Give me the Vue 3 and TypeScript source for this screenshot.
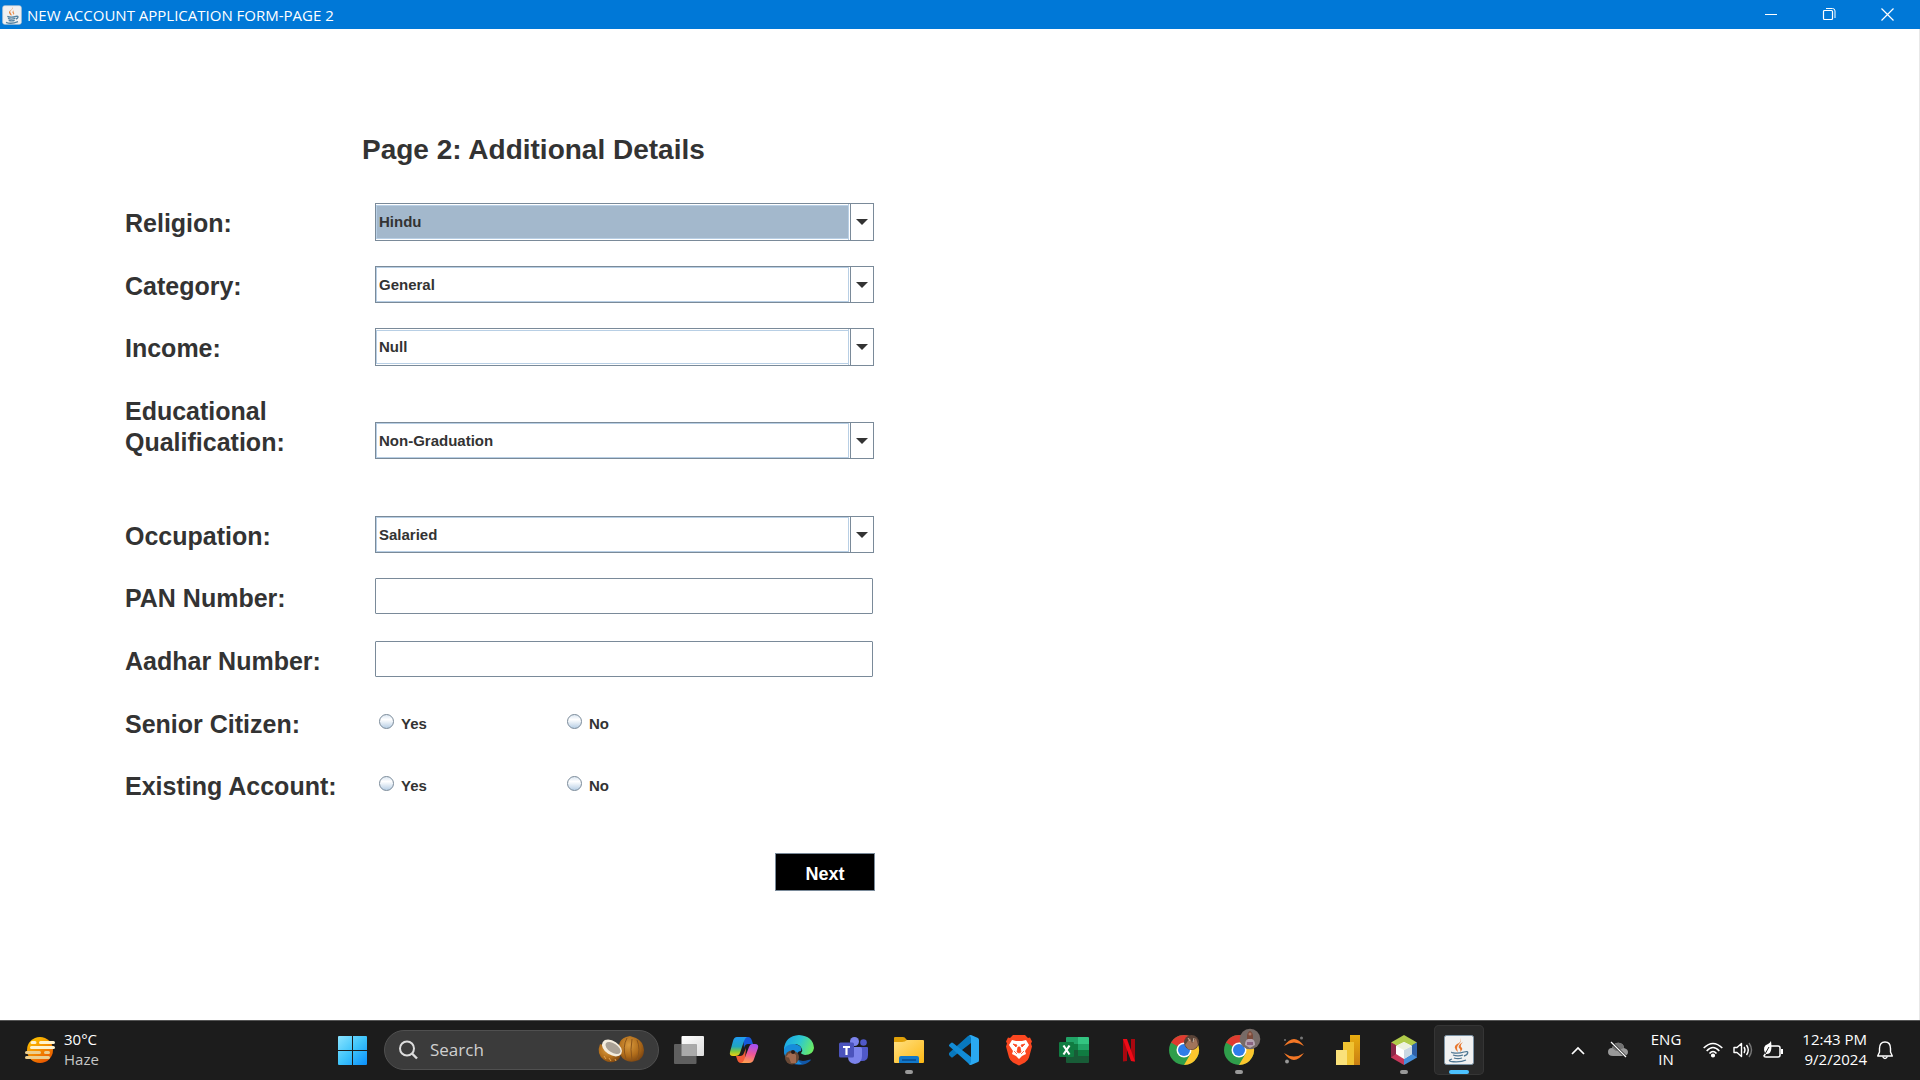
<script setup lang="ts">
import { reactive } from 'vue'

interface ComboRow {
  key: 'religion' | 'category' | 'income' | 'education' | 'occupation'
  label: string
  options: string[]
  size?: 'tall' | 'double'
}

const combos: ComboRow[] = [
  { key: 'religion', label: 'Religion:', options: ['Hindu', 'Muslim', 'Sikh', 'Christian', 'Other'], size: 'tall' },
  { key: 'category', label: 'Category:', options: ['General', 'OBC', 'SC', 'ST', 'Other'] },
  { key: 'income', label: 'Income:', options: ['Null', '<1,50,000', '<2,50,000', '<5,00,000', 'Upto 10,00,000'], size: 'tall' },
  { key: 'education', label: 'Educational Qualification:', options: ['Non-Graduation', 'Graduate', 'Post-Graduate', 'Doctorate'], size: 'double' },
  { key: 'occupation', label: 'Occupation:', options: ['Salaried', 'Self-Employed', 'Business', 'Student', 'Retired'] },
]

const form = reactive({
  religion: 'Hindu',
  category: 'General',
  income: 'Null',
  education: 'Non-Graduation',
  occupation: 'Salaried',
  pan: '',
  aadhar: '',
  senior: '',
  existing: '',
})
</script>

<template>
  <div class="desktop">
    <header class="titlebar">
      <svg class="app-icon" viewBox="0 0 30 30" aria-hidden="true">
        <rect x="1" y="1" width="28" height="28" rx="3" fill="#f1f1f1" stroke="#c3ccd3" />
        <path d="M16 3c2 4-6 5-3 9 1 2 2 2 1 4-5-4-4-6-1-8 2-2 3-3 3-5zM18 8c-3 2-3 3-1 5 0 1-1 2-1 2 4-2 2-3 1-5z" fill="#e8833a" />
        <path d="M8 17c4 2 10 1 13 0M9 20c4 2 8 1 11 0M10 23c3 1 6 1 9 0M6 26c5 2 13 1 18-1M21 17c5-1 3 3 0 4" fill="none" stroke="#5382a1" stroke-width="2" />
      </svg>
      <h1 class="window-title">NEW ACCOUNT APPLICATION FORM-PAGE 2</h1>
      <div class="window-controls">
        <button type="button" aria-label="Minimize">
          <svg width="13" height="13" viewBox="0 0 13 13"><path d="M0 6.500h12" stroke="#fff" /></svg>
        </button>
        <button type="button" aria-label="Restore">
          <svg width="13" height="13" viewBox="0 0 13 13" fill="none" stroke="#fff">
            <rect x=".5" y="2.500" width="9" height="9" rx="1" stroke-width="1.200" />
            <path d="M3 .5h6.500q2.500 0 2.500 2.500V10" />
          </svg>
        </button>
        <button type="button" aria-label="Close">
          <svg width="13" height="13" viewBox="0 0 13 13"><path d="M.5.500l12 12M12.500.500l-12 12" stroke="#fff" stroke-width="1.200" /></svg>
        </button>
      </div>
    </header>

    <main class="content">
      <form class="form" @submit.prevent>
        <h2 class="heading">Page 2: Additional Details</h2>

        <div v-for="row in combos" :key="row.key" class="row" :class="row.size">
          <label class="label" :for="row.key">{{ row.label }}</label>
          <div class="combo" :class="{ selected: row.key === 'religion' }">
            <select :id="row.key" v-model="form[row.key]">
              <option v-for="o in row.options" :key="o">{{ o }}</option>
            </select>
            <span class="combo-arrow" aria-hidden="true"></span>
          </div>
        </div>

        <div class="row tall">
          <label class="label" for="pan">PAN Number:</label>
          <input id="pan" v-model="form.pan" class="field" type="text" />
        </div>
        <div class="row tall">
          <label class="label" for="aadhar">Aadhar Number:</label>
          <input id="aadhar" v-model="form.aadhar" class="field" type="text" />
        </div>

        <div class="row" role="radiogroup" aria-labelledby="senior-label">
          <span id="senior-label" class="label">Senior Citizen:</span>
          <div class="radios">
            <label><input v-model="form.senior" type="radio" name="senior" value="yes" />Yes</label>
            <label><input v-model="form.senior" type="radio" name="senior" value="no" />No</label>
          </div>
        </div>
        <div class="row" role="radiogroup" aria-labelledby="existing-label">
          <span id="existing-label" class="label">Existing Account:</span>
          <div class="radios">
            <label><input v-model="form.existing" type="radio" name="existing" value="yes" />Yes</label>
            <label><input v-model="form.existing" type="radio" name="existing" value="no" />No</label>
          </div>
        </div>

        <div class="actions">
          <button class="next" type="submit">Next</button>
        </div>
      </form>
    </main>

    <footer class="taskbar">
      <div class="weather">
        <svg width="30" height="26" viewBox="0 0 30 26">
          <defs>
            <linearGradient id="sun" x1="0" y1="0" x2=".6" y2="1"><stop offset="0" stop-color="#ffd000" /><stop offset="1" stop-color="#ea5a00" /></linearGradient>
          </defs>
          <circle cx="15" cy="13" r="13" fill="url(#sun)" />
          <path d="M7 5.500h3M15.500 5.500h13M6.500 10.500h22" stroke="#fff3cf" stroke-width="3" stroke-linecap="round" />
          <path d="M1.500 15.500h13M20.500 15.500h3M1.500 20.500h22" stroke="#ecce8d" stroke-width="3" stroke-linecap="round" />
        </svg>
        <div class="lines">
          <div>30°C</div>
          <div class="dim">Haze</div>
        </div>
      </div>

      <button class="start" type="button" aria-label="Start">
        <svg width="29" height="29" viewBox="0 0 29 29">
          <defs>
            <linearGradient id="win" x1="0" y1="0" x2="1" y2="1"><stop offset="0" stop-color="#8be4ff" /><stop offset=".5" stop-color="#3ec4fb" /><stop offset="1" stop-color="#0a8ffb" /></linearGradient>
          </defs>
          <path d="M1 0h13v14H0V1q0-1 1-1zM15 0h13q1 0 1 1v13H15zM0 15h14v14H1q-1 0-1-1zM15 15h14v13q0 1-1 1H15z" fill="url(#win)" />
        </svg>
      </button>

      <label class="search">
        <svg width="20" height="20" viewBox="0 0 20 20" fill="none" stroke="#dcdcdc" stroke-width="2">
          <circle cx="8" cy="8.500" r="7" /><path d="M13 13.500l5 5" stroke-width="2.400" />
        </svg>
        <input type="text" placeholder="Search" aria-label="Search" />
        <svg width="46" height="28" viewBox="0 0 46 28">
          <defs>
            <radialGradient id="nut" cx=".4" cy=".35" r=".7"><stop offset="0" stop-color="#d99a3e" /><stop offset=".6" stop-color="#b06c1a" /><stop offset="1" stop-color="#7c4511" /></radialGradient>
          </defs>
          <path d="M21 9q1-6 7-8l4-1 6 2q7 3 8 12 0 9-8 11-6 2-11-1-7-4-6-15z" fill="url(#nut)" />
          <path d="M29 2q-5 9-1 21M34 3q-2 10 0 22M39 4q4 9 0 20" stroke="#8b551b" fill="none" />
          <path d="M2 8q-4 10 4 16 6 4 12 1 5-2 5-9z" fill="url(#nut)" />
          <ellipse cx="14" cy="12" rx="11" ry="7" transform="rotate(33 14 12)" fill="#f4ecdd" />
          <ellipse cx="15" cy="12" rx="8.500" ry="4.500" transform="rotate(33 15 12)" fill="#aaa195" />
          <path d="M6 20l2 3M11 22l2 3M17 23l1 2" stroke="#e2a34d" />
        </svg>
      </label>

      <nav class="apps" aria-label="Pinned apps">
        <button type="button" aria-label="Task view">
          <svg viewBox="0 0 30 30">
            <defs>
              <linearGradient id="tv" x1="0" y1="0" x2="1" y2="1"><stop offset="0" stop-color="#fff" /><stop offset="1" stop-color="#dcdcdc" /></linearGradient>
            </defs>
            <rect x="7.500" y="1" width="22.500" height="20" rx="1" fill="url(#tv)" />
            <rect y="9" width="22.500" height="20" rx="1" fill="#5f5f5f" />
            <rect x="7.500" y="9" width="15" height="12" fill="#aaa" />
          </svg>
        </button>
        <button type="button" aria-label="Copilot">
          <svg viewBox="0 0 30 30">
            <defs>
              <linearGradient id="cp1" x1="0" y1="0" x2="0" y2="1"><stop offset="0" stop-color="#219bf2" /><stop offset=".5" stop-color="#20a5c0" /><stop offset=".75" stop-color="#7ec83f" /><stop offset="1" stop-color="#f5cf10" /></linearGradient>
              <linearGradient id="cp2" x1=".5" y1="0" x2=".3" y2="1"><stop offset="0" stop-color="#a34ff2" /><stop offset=".5" stop-color="#ef5796" /><stop offset="1" stop-color="#ffa04e" /></linearGradient>
            </defs>
            <path d="M14 2h5q3 0 4 4l1 3h-5q-3 0-4 4z" fill="#1558da" />
            <path d="M8 2h10q-2 1-3 4l-4 12q-1 3-5 3H4q-4 0-3-4L4 6q1-4 4-4z" fill="url(#cp1)" />
            <path d="M7 21h4q3 0 4-3l2-5q-1 10-1 15h-4q-3 0-4-4z" fill="#f35b36" />
            <path d="M23 9h3q4 0 3 4l-4 11q-1 4-5 4h-8q2 0 3-3l5-13q1-3 3-3z" fill="url(#cp2)" />
          </svg>
        </button>
        <button type="button" aria-label="Edge">
          <svg viewBox="0 0 30 30">
            <defs>
              <linearGradient id="ed1" x1="0" y1=".3" x2="1" y2=".6"><stop offset="0" stop-color="#1aa6e8" /><stop offset=".5" stop-color="#2dc8d0" /><stop offset="1" stop-color="#6ced61" /></linearGradient>
            </defs>
            <path d="M10 10q-4 5 0 11 5 7 14 4 3-1 3 0-4 5-12 5Q1 29 0 15q2-8 10-5z" fill="#1257a7" />
            <path d="M0 13q3-6 11-4 8 2 6 7-3 0-4 3-1 6 5 10Q3 30 0 18z" fill="#168cda" />
            <path d="M0 14Q1 1 15 0q14 1 15 13-1 7-9 7-4-1-4-2 2-2 1-4-2-5-8-5Q3 9 0 14z" fill="url(#ed1)" />
            <circle cx="8" cy="22.500" r="7" fill="#694936" />
            <path d="M4 20q4-5 8 0v8H7zM2 22l3-4 2 5z" fill="#a26b50" />
            <circle cx="9" cy="17" r="2" fill="#241a19" />
          </svg>
        </button>
        <button type="button" aria-label="Teams">
          <svg viewBox="0 0 30 30">
            <circle cx="24.500" cy="7.500" r="3.300" fill="#5059c9" />
            <path d="M20 12h8q1 0 1 1v7q0 6-6 6h-3z" fill="#5059c9" />
            <circle cx="15.500" cy="6.500" r="4.500" fill="#7b83eb" />
            <path d="M10 12h11q2 0 2 2v7q0 7-7 8-7-1-7-7z" fill="#7b83eb" />
            <rect y="7.500" width="15" height="15" rx="1.500" fill="#4b53bc" />
            <path d="M4 11h7v2H8.600v7H6.400v-7H4z" fill="#fff" />
          </svg>
        </button>
        <button type="button" class="running" aria-label="File Explorer">
          <svg viewBox="0 0 30 30">
            <defs>
              <linearGradient id="fx" x1="0" y1="0" x2="1" y2="1"><stop offset="0" stop-color="#ffe082" /><stop offset="1" stop-color="#fdb813" /></linearGradient>
            </defs>
            <path d="M0 3q0-1 1-1h8q2 0 3 2l2 2v5H0z" fill="#e0a008" />
            <path d="M0 7h8q3 0 5-2h16q1 0 1 1v21q0 1-1 1H1q-1 0-1-1z" fill="url(#fx)" />
            <path d="M5 28v-5q0-2 2-2h16q2 0 2 2v5z" fill="#1178ca" />
            <path d="M8 25h14" stroke="#074a8d" stroke-width="1.500" />
          </svg>
        </button>
        <button type="button" aria-label="Visual Studio Code">
          <svg viewBox="0 0 30 30">
            <path d="M22 0v8L4 22q-1 1-2 0l-2-2v-2L19 1q2-1 3-1z" fill="#0878bd" />
            <path d="M0 11v-1l2-2q1-1 2 0l18 14v8q-2 0-3-2z" fill="#128bd5" />
            <path d="M22 0l7 3q1 1 1 2v20q0 2-1 2l-7 3q-1 0-2-1 2 0 2-2V3q0-2-2-2 1-1 2-1z" fill="#2aa9f2" />
          </svg>
        </button>
        <button type="button" aria-label="Brave">
          <svg viewBox="0 0 30 30">
            <path d="M9 0h12l3 3 2-.500 2 4-1 2 1 3-3 11q-1 3-4 5l-6 3-6-3q-3-2-4-5L2 11.500l1-3-1-2 2-4L6 3z" fill="#fb4720" />
            <path d="M8 5l4 1h6l4-1 3 5-4 6 1 3-4 2-3 3-3-3-4-2 1-3-4-6z" fill="#fff" />
            <path d="M9 9l4 1-1 2zM21 9l-4 1 1 2zM14 12h2l1 5-2 1-2-1zM10 16l3 3M20 16l-3 3" fill="#fb4720" stroke="#fb4720" stroke-width=".8" />
          </svg>
        </button>
        <button type="button" aria-label="Excel">
          <svg viewBox="0 0 30 30">
            <path d="M8 2h11v7H7V3q0-1 1-1z" fill="#21a366" /><path d="M19 2h10q1 0 1 1v6H19z" fill="#33c481" />
            <path d="M7 9h12v6H7z" fill="#107c41" /><path d="M19 9h11v6H19z" fill="#21a366" />
            <path d="M7 15h12v6H7z" fill="#185c37" /><path d="M19 15h11v6H19z" fill="#107c41" />
            <path d="M7 21h23v6q0 1-1 1H8q-1 0-1-1z" fill="#185c37" />
            <rect y="7" width="15" height="15" rx="1" fill="#107c41" />
            <path d="M4.500 10.500l6 9M10.500 10.500l-6 9" stroke="#fff" stroke-width="2.200" />
          </svg>
        </button>
        <button type="button" aria-label="Netflix">
          <svg viewBox="0 0 30 30">
            <path d="M9 4h4v22l-4 .500zM17 4h4v22.500l-4-.500z" fill="#a9070f" />
            <path d="M9 4h4l8 22.500-4-.500z" fill="#ee0a17" />
          </svg>
        </button>
        <button type="button" aria-label="Chrome">
          <svg viewBox="0 0 30 30">
            <circle cx="15" cy="15" r="15" fill="#2f9e4b" />
            <path d="M15 15L2 7.500A15 15 0 0 1 28 7.500H15z" fill="#e03b30" />
            <path d="M15 7.500h13A15 15 0 0 1 15 30l7-12z" fill="#fcc62d" />
            <circle cx="15" cy="15" r="7.500" fill="#fff" /><circle cx="15" cy="15" r="6" fill="#2f7de9" />
            <circle cx="22.500" cy="7.500" r="7.500" fill="#5a4337" />
            <path d="M16 10l5-7 2 5 4-5 2 7q-4 6-10 4z" fill="#a1745a" />
            <path d="M19 3l2 3M25 3l-1 4" stroke="#c4b2a2" />
          </svg>
        </button>
        <button type="button" class="running" aria-label="Chrome profile">
          <svg viewBox="0 0 30 30">
            <circle cx="15" cy="15" r="15" fill="#2f9e4b" />
            <path d="M15 15L2 7.500A15 15 0 0 1 28 7.500H15z" fill="#e03b30" />
            <path d="M15 7.500h13A15 15 0 0 1 15 30l7-12z" fill="#fcc62d" />
            <circle cx="15" cy="15" r="7.500" fill="#fff" /><circle cx="15" cy="15" r="6" fill="#2f7de9" />
            <circle cx="26" cy="4" r="10.300" fill="#776b67" />
            <path d="M23 0q3-8 6 0v7h-6z" fill="#7a4a3a" /><circle cx="26" cy="-1" r="1.500" fill="#a87866" />
            <path d="M21 10q0-5 3-6h4q3 1 3 6l-5 3z" fill="#b5a3b0" /><path d="M23 7h6v3h-6z" fill="#8a6480" />
          </svg>
        </button>
        <button type="button" aria-label="Jupyter">
          <svg viewBox="0 0 30 30">
            <path d="M5 11Q15-3 25 11 15 4 5 11zM5 18q10 7 20 0-10 14-20 0z" fill="#f37726" />
            <circle cx="22.500" cy="3" r="1.500" fill="#777" /><circle cx="6" cy="5" r="1" fill="#777" /><circle cx="8" cy="26.500" r="1.900" fill="#989898" />
          </svg>
        </button>
        <button type="button" aria-label="Power BI">
          <svg viewBox="0 0 30 30">
            <defs>
              <linearGradient id="pb" x1="0" y1="0" x2="0" y2="1"><stop offset="0" stop-color="#e8ad10" /><stop offset="1" stop-color="#c87d12" /></linearGradient>
            </defs>
            <path d="M16 0h10v30H16z" fill="url(#pb)" /><path d="M9 7h11v23H9z" fill="#f0c332" /><path d="M2 15h11v15H2z" fill="#fae17a" />
          </svg>
        </button>
        <button type="button" class="running" aria-label="NetBeans">
          <svg viewBox="0 0 30 30">
            <path d="M15 0l13 7.500-13 7.500L2 7.500z" fill="#b0cb4a" /><path d="M2 7.500L15 15v15L2 22.500z" fill="#c8385b" /><path d="M28 7.500L15 15v15l13-7.500z" fill="#4690dc" />
            <path d="M2 7.500l5 3V19l-5 3.500z" fill="#8b2848" /><path d="M28 7.500l-5 3V19l5 3.500z" fill="#2f60a7" />
            <path d="M15 7l8 4v8l-8 5-8-5v-8z" fill="#fff" /><path d="M15 15l8-4v8l-8 5z" fill="#cad8e3" /><path d="M15 7l8 4-8 4-8-4z" fill="#edf2df" />
          </svg>
        </button>
        <button type="button" class="running active" aria-label="Java">
          <svg viewBox="0 0 30 30">
            <rect x=".5" y=".5" width="29" height="29" rx="2" fill="#f1f1f1" stroke="#7d95a7" />
            <path d="M16 3q2 4-3 6-5 3 1 8-1-3-1-4 0-2 2-4 3-3 1-6zM19 7q-7 4-3 7 1 1 0 3 4-3 1-5-1-2 2-5z" fill="#e8762d" />
            <path d="M8 17c-2 1 6 2 12 0M9 20c3 1 7 1 10 0M10 23c3 1 5 1 8 0M8 24c-9 3 8 4 14 1M20 17c6-2 4 3 0 4" fill="none" stroke="#4f7692" stroke-width="1.300" />
          </svg>
        </button>
      </nav>

      <div class="tray">
        <button class="chevron" type="button" aria-label="Show hidden icons">
          <svg width="14" height="9" viewBox="0 0 14 9"><path d="M1 8l6-6 6 6" fill="none" stroke="#fff" stroke-width="1.700" /></svg>
        </button>
        <svg class="cloud" width="20" height="18" viewBox="0 0 20 18">
          <path d="M5 15q-5 0-5-4 0-4 4-4 2-6 8-5 4 1 4 5 4 1 4 4 0 4-5 4z" fill="#999" />
          <path d="M4 7q2-6 8-5 4 1 4 5l-8 3z" fill="#727272" />
          <path d="M3 1l15 15" stroke="#1c1c1c" stroke-width="2.500" /><path d="M3 1l15 15" stroke="#fff" stroke-width="1.300" />
        </svg>
        <div class="lines lang"><div>ENG</div><div>IN</div></div>
        <div class="status">
          <svg width="20" height="16" viewBox="0 0 20 16" fill="none" stroke="#fff" stroke-width="1.600">
            <path d="M.7 6Q10-3 19.300 6" /><path d="M3.700 9Q10 2 16.300 9" /><path d="M6.500 11.500Q10 7.500 13.500 11.500" /><circle cx="10" cy="13.500" r="1.300" fill="#fff" />
          </svg>
          <svg width="20" height="16" viewBox="0 0 20 16" fill="none" stroke="#fff" stroke-width="1.400">
            <path d="M1 5.500h3L8.500 1.500v13L4 10.500H1z" stroke-linejoin="round" /><path d="M11 5q2 3 0 6M13.500 3q3.500 5 0 10" /><path d="M16 1q5 7 0 14" stroke="#777" />
          </svg>
          <svg width="20" height="18" viewBox="0 0 20 18">
            <path d="M8 5h7q2 0 2 2v7q0 2-2 2H3q-2 0-2-1" fill="none" stroke="#fff" stroke-width="1.500" /><path d="M18 8h2v5h-2z" fill="#fff" />
            <path d="M8 0q2 14-5 13l-1 2H0l2-3Q-1 5 5 3q2-1 3-3z" fill="#fff" /><path d="M2 13l4-7" stroke="#1c1c1c" />
          </svg>
        </div>
        <div class="lines clock"><div>12:43 PM</div><div>9/2/2024</div></div>
        <button class="bell" type="button" aria-label="Notifications">
          <svg width="16" height="19" viewBox="0 0 16 19" fill="none" stroke="#fff" stroke-width="1.400" stroke-linejoin="round">
            <path d="M2.500 7.500q0-6.500 5.500-6.500t5.500 6.500V11L15.300 15H.7l1.800-4z" /><path d="M5.500 15.500q2.500 4 5 0" />
          </svg>
        </button>
      </div>
    </footer>
  </div>
</template>

<style>
body {
  margin: 0;
  background: #fff;
}
</style>

<style scoped>
* {
  box-sizing: border-box;
}
button {
  padding: 0;
  border: 0;
  background: none;
}
svg {
  display: block;
  overflow: visible;
}
.desktop {
  display: flex;
  flex-direction: column;
  min-height: 100vh;
  font-family: "Liberation Sans", Arial, sans-serif;
  color: #333;
}
.titlebar {
  display: flex;
  align-items: center;
  height: 29px;
  padding: 0 4px 0 2px;
  background: #0078d7;
}
.app-icon {
  width: 20px;
  height: 20px;
}
.window-title {
  flex: 1;
  margin: 0 0 0 5px;
  font: 400 15px/28px "Open Sans", "Noto Sans", sans-serif;
  color: #fff;
}
.window-controls {
  display: flex;
}
.window-controls button {
  display: grid;
  place-items: center;
  width: 58px;
  height: 28px;
}
.content {
  flex: 1;
  padding: 102px 0 50px 125px;
  border-right: 1px solid #e8e8e8;
}
.form {
  max-width: 750px;
}
.heading {
  margin: 0 0 34px 237px;
  font-size: 28px;
  line-height: 38px;
}
.row {
  display: grid;
  grid-template-columns: 250px minmax(0, 499px);
  align-items: start;
  min-height: 37px;
  margin-bottom: 25px;
}
.row.tall {
  min-height: 38px;
}
.row.double {
  min-height: 100px;
}
.label {
  max-width: 220px;
  padding-top: 5px;
  font-size: 25px;
  font-weight: 700;
  line-height: 31px;
}
.combo {
  display: grid;
  height: 37px;
  border: 1px solid #7a8a99;
  background: #fff;
}
.tall .combo {
  height: 38px;
  padding: 1px 0;
}
.double .combo {
  margin-top: 31px;
}
.combo select {
  grid-area: 1 / 1;
  width: 100%;
  height: 100%;
  padding: 0 26px 0 2px;
  appearance: none;
  border: 1px solid #b8cfe5;
  border-radius: 0;
  background: #fff;
  font: 700 15px/20px "Liberation Sans", Arial, sans-serif;
  color: #333;
}
.combo.selected select {
  background: #a3b8cc;
}
.combo-arrow {
  grid-area: 1 / 1;
  justify-self: end;
  display: grid;
  place-items: center;
  width: 23px;
  border-left: 1px solid #7a8a99;
  background: #fff;
  box-shadow: -1px 0 #fff, -2px 0 #b8cfe5;
  pointer-events: none;
}
.tall .combo-arrow {
  margin: -1px 0;
}
.combo-arrow::before {
  content: "";
  border: 6px solid transparent;
  border-top-color: #333;
  border-bottom: 0;
}
.field {
  width: 100%;
  max-width: 498px;
  height: 36px;
  padding: 0 4px;
  border: 1px solid #7a8a99;
  border-radius: 1px;
  background: #fff;
  font: 400 15px/20px "Liberation Sans", Arial, sans-serif;
}
.radios {
  display: flex;
  padding: 10px 0 0 4px;
}
.radios label {
  display: flex;
  gap: 7px;
  width: 188px;
  font-size: 15px;
  font-weight: 700;
  line-height: 20px;
}
.radios input {
  appearance: none;
  width: 15px;
  height: 15px;
  margin: 0;
  border: 1px solid #7a8a99;
  border-radius: 50%;
  background: linear-gradient(#dde8f3, #fff 35%, #b8cfe5);
}
.radios input:checked {
  box-shadow: inset 0 0 0 3px #fff;
  background: #333;
}
.actions {
  display: flex;
  justify-content: flex-end;
  padding-top: 25px;
}
.next {
  width: 100px;
  height: 38px;
  padding-top: 3px;
  border: 1px solid #7a8a99;
  background: #000;
  font: 700 18px/32px "Liberation Sans", Arial, sans-serif;
  color: #fff;
}
.taskbar {
  display: flex;
  align-items: center;
  height: 60px;
  padding-bottom: 1px;
  border-top: 1px solid #555;
  background: #1c1c1c;
  font: 400 15px/20px "Open Sans", "Noto Sans", sans-serif;
  color: #fff;
}
.lines {
  padding-bottom: 2px;
}
.weather {
  display: flex;
  align-items: center;
  gap: 9px;
  width: 325px;
  padding-left: 25px;
}
.dim {
  color: #c6c6c6;
}
.start {
  display: grid;
  place-items: center;
  width: 55px;
  height: 50px;
}
.search {
  display: flex;
  align-items: center;
  width: 275px;
  height: 40px;
  margin: 0 2px 0 4px;
  padding: 0 14px;
  border: 1px solid #505050;
  border-radius: 20px;
  background: #3b3b3b;
}
.search input {
  flex: 1;
  min-width: 0;
  padding: 0 0 0 11px;
  border: 0;
  outline: 0;
  background: none;
  font: 400 17px/24px "Open Sans", "Noto Sans", sans-serif;
  color: #fff;
}
.search input::placeholder {
  color: #d0d0d0;
}
.apps {
  display: flex;
  gap: 5px;
  margin-left: 3px;
}
.apps button {
  position: relative;
  display: grid;
  place-items: center;
  width: 50px;
  height: 50px;
  border-radius: 5px;
}
.apps svg {
  width: 30px;
  height: 30px;
}
.apps .active {
  background: #292929;
  box-shadow: inset 0 0 0 1px #353535;
}
.running::after {
  content: "";
  position: absolute;
  bottom: 1px;
  left: 21px;
  width: 8px;
  height: 4px;
  border-radius: 2px;
  background: #999;
}
.running.active::after {
  left: 15px;
  width: 20px;
  background: #4cc2ff;
}
.tray {
  display: flex;
  align-items: center;
  margin-left: auto;
  padding-right: 27px;
}
.cloud {
  margin-left: 23px;
}
.lang {
  margin-left: 23px;
  text-align: center;
}
.status {
  display: flex;
  align-items: center;
  gap: 10px;
  margin-left: 22px;
}
.clock {
  margin-left: 19px;
  text-align: right;
}
.bell {
  margin-left: 10px;
}
</style>
